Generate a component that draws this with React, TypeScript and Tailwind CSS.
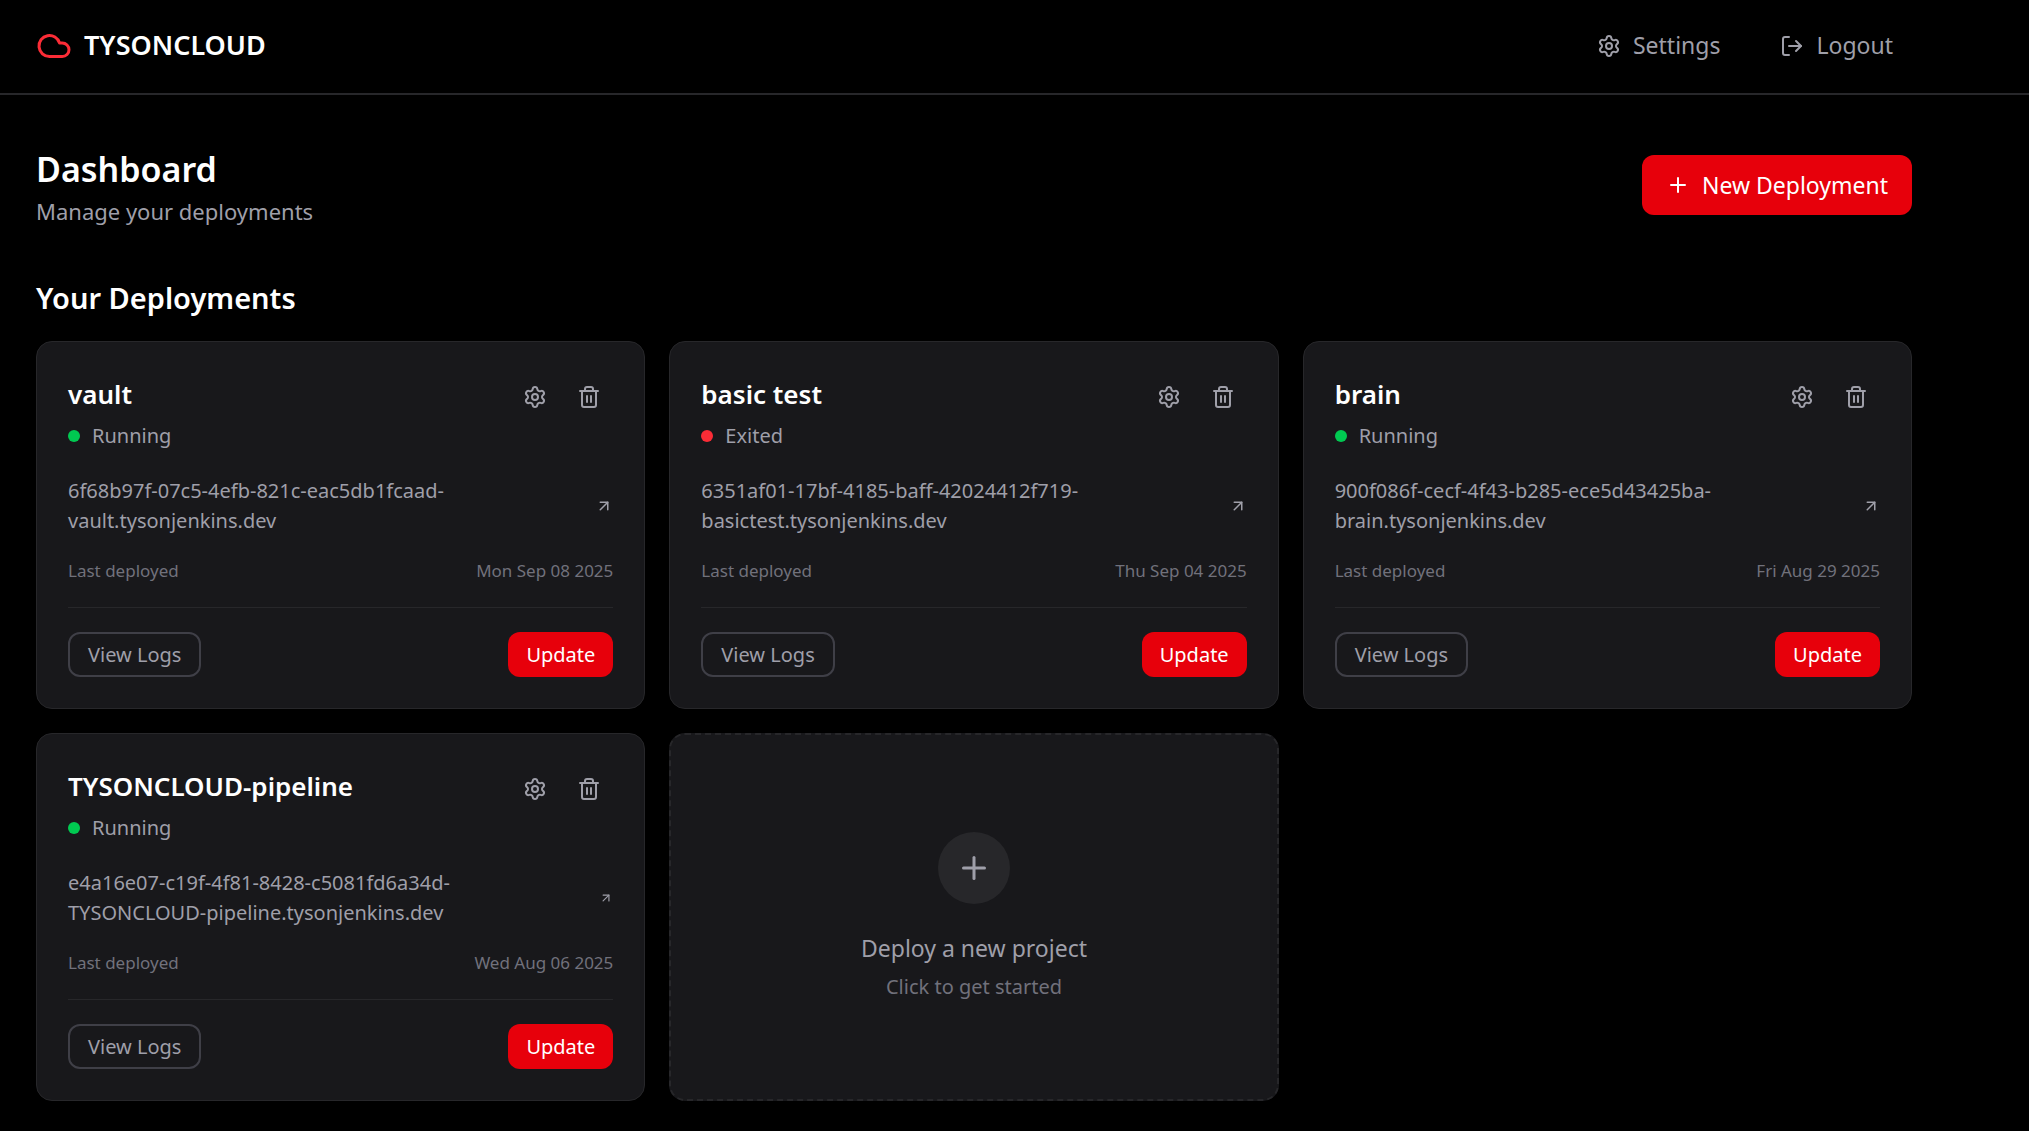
import { Settings, LogOut, Trash2, Cloud, Plus, ArrowUpRight } from "lucide-react";

type Deployment = {
  name: string;
  running: boolean;
  id: string;
  host: string;
  date: string;
};

const deployments: Deployment[] = [
  { name: "vault", running: true, id: "6f68b97f-07c5-4efb-821c-eac5db1fcaad-", host: "vault.tysonjenkins.dev", date: "Mon Sep 08 2025" },
  { name: "basic test", running: false, id: "6351af01-17bf-4185-baff-42024412f719-", host: "basictest.tysonjenkins.dev", date: "Thu Sep 04 2025" },
  { name: "brain", running: true, id: "900f086f-cecf-4f43-b285-ece5d43425ba-", host: "brain.tysonjenkins.dev", date: "Fri Aug 29 2025" },
  { name: "TYSONCLOUD-pipeline", running: true, id: "e4a16e07-c19f-4f81-8428-c5081fd6a34d-", host: "TYSONCLOUD-pipeline.tysonjenkins.dev", date: "Wed Aug 06 2025" },
];

function DeploymentCard({ d }: { d: Deployment }) {
  const arrowSize = d.host.length > 30 ? 14 : 18;
  return (
    <article className="rounded-2xl border border-zinc-800 bg-zinc-900 p-[31px]">
      <div className="flex justify-between">
        <div>
          <h3 className="text-[26px] leading-[42px] font-semibold text-white">{d.name}</h3>
          <p className="flex items-center text-[20px] leading-[42px]">
            <span className={d.running ? "mr-3 size-3 rounded-full bg-green-500" : "mr-3 size-3 rounded-full bg-red-500"} />
            {d.running ? "Running" : "Exited"}
          </p>
        </div>
        <div className="flex items-start gap-[30px] pt-3 pr-3">
          <button type="button" aria-label="Settings"><Settings size={24} /></button>
          <button type="button" aria-label="Delete"><Trash2 size={24} /></button>
        </div>
      </div>
      <a href="#" className="mt-[19px] flex items-center justify-between text-[20px] leading-[30px]">
        <span>{d.id}<br />{d.host}</span>
        <ArrowUpRight size={arrowSize} />
      </a>
      <div className="mt-[23px] flex justify-between text-[17px] leading-6 text-zinc-500">
        <span>Last deployed</span>
        <span>{d.date}</span>
      </div>
      <div className="mt-6 flex justify-between border-t border-zinc-800 pt-6">
        <button type="button" className="h-[45px] rounded-xl border-2 border-zinc-700 px-[18px] text-[20px]">View Logs</button>
        <button type="button" className="h-[45px] rounded-xl bg-[#e7000b] px-[18px] text-[20px] text-white">Update</button>
      </div>
    </article>
  );
}

export default function App() {
  return (
    <div className="min-h-screen bg-black font-['Noto_Sans',sans-serif] text-zinc-400">
      <header className="border-b-2 border-zinc-800">
        <div className="flex h-[93px] items-center justify-between pr-[136px] pb-[2px] pl-9">
          <a href="#" className="flex items-center gap-3 text-[27px] font-semibold text-white">
            <Cloud size={36} className="text-red-500" />
            TYSONCLOUD
          </a>
          <nav className="flex items-center gap-[60px] text-[23px]">
            <a href="#" className="flex items-center gap-3"><Settings size={24} />Settings</a>
            <a href="#" className="flex items-center gap-3"><LogOut size={24} />Logout</a>
          </nav>
        </div>
      </header>
      <main className="pr-[117px] pl-9">
        <div className="flex items-center justify-between pt-12">
          <div>
            <h1 className="text-[34px] leading-[52px] font-semibold text-white">Dashboard</h1>
            <p className="text-[22px] leading-8">Manage your deployments</p>
          </div>
          <button type="button" className="flex h-[60px] items-center gap-3 rounded-xl bg-[#e7000b] px-6 text-[23px] text-white">
            <Plus size={24} />New Deployment
          </button>
        </div>
        <h2 className="mt-[52px] text-[29px] leading-[38px] font-semibold text-white">Your Deployments</h2>
        <div className="mt-6 grid grid-cols-3 gap-6">
          {deployments.map((d) => <DeploymentCard key={d.name} d={d} />)}
          <button type="button" className="flex flex-col items-center justify-center rounded-2xl border-2 border-dashed border-zinc-800 bg-zinc-900">
            <span className="flex size-[72px] items-center justify-center rounded-full bg-zinc-800"><Plus size={36} /></span>
            <span className="mt-[26px] text-[23px] leading-9">Deploy a new project</span>
            <span className="mt-[6px] text-[20px] leading-[30px] text-zinc-500">Click to get started</span>
          </button>
        </div>
      </main>
    </div>
  );
}
